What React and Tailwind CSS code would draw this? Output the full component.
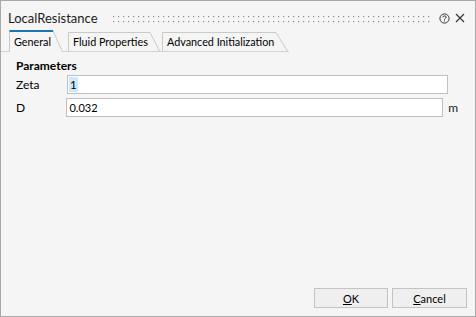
import React from "react";

const font = { fontFamily: 'Lato, "Noto Sans", sans-serif' };

function Tab({ label, width, slant, active, ml }) {
  const h = active ? 21 : 19;
  const H = h + (active ? 1 : 0);
  return (
    <div
      className={`relative flex items-center whitespace-nowrap ${active ? "z-10 -mb-px" : ""}`}
      style={{ width, height: H, marginLeft: ml }}
    >
      <svg className="absolute inset-0" width={width} height={H}>
        <path
          d={`M0.5,${H} L0.5,0.5 L${width - slant},0.5 L${width - 0.5},${H}`}
          fill="#f5f5f5"
          stroke="#c9c9c9"
          strokeWidth="1"
        />
        {active && <rect x="0.5" y="0" width={width - slant - 0.5} height="2" fill="#1f74b4" />}
      </svg>
      <span className="relative pl-[5px] text-[10.8px] leading-none text-black" style={{ marginTop: 2 }}>
        {label}
      </span>
    </div>
  );
}

export default function App() {
  return (
    <div
      className="w-[476px] h-[317px] bg-[#f5f5f5] border border-[#a9a9a9] flex flex-col overflow-hidden whitespace-nowrap"
      style={font}
    >
      {/* title bar */}
      <div className="h-[30px] shrink-0 flex items-start pl-[7px] pr-[10px]">
        <span className="mt-[11px] text-[13px] text-[#1b1b1b] leading-none">LocalResistance</span>
        <div className="flex-1 ml-[15px] mr-[9px] h-[7px] mt-[15px]">
          <svg width="100%" height="7" className="block">
            <defs>
              <pattern id="dots" width="5" height="5" patternUnits="userSpaceOnUse">
                <rect x="0" y="0" width="1.2" height="1.2" fill="#8c8c8c" />
              </pattern>
            </defs>
            <rect x="0" y="0" width="100%" height="7" fill="url(#dots)" />
          </svg>
        </div>
        <svg width="11" height="11" viewBox="0 0 11 11" className="mt-[12px] block">
          <circle cx="5.5" cy="5.5" r="4.6" fill="none" stroke="#333" strokeWidth="1" />
          <path d="M3.9,4.3 Q3.9,2.9 5.5,2.9 Q7.1,2.9 7.1,4.2 Q7.1,5 6.1,5.5 Q5.5,5.8 5.5,6.6" fill="none" stroke="#333" strokeWidth="1" />
          <rect x="5" y="7.4" width="1" height="1" fill="#333" />
        </svg>
        <svg width="10" height="10" viewBox="0 0 10 10" className="ml-[5px] mt-[12px] block">
          <path d="M1,1 L9,9 M9,1 L1,9" stroke="#333" strokeWidth="1.1" />
        </svg>
      </div>

      {/* tabs */}
      <div className="h-[21px] shrink-0 flex items-end">
        <div className="flex items-end w-[288px] border-b border-[#d4d4d4] h-[21px] pl-[8px]">
          <Tab label="General" width={54} slant={10} active ml={0} />
          <Tab label="Fluid Properties" width={92} slant={10} ml={5} />
          <Tab label="Advanced Initialization" width={126} slant={12} ml={2} />
        </div>
      </div>

      {/* panel */}
      <div className="flex-1 flex flex-col pl-[15px] pr-[17px]">
        <div className="mt-[7px] text-[12px] font-bold leading-[14px] text-black">Parameters</div>
        <div className="mt-[2px] flex items-center">
          <span className="w-[51px] text-[12px] text-black leading-none">Zeta</span>
          <div className="w-[381px] h-[19px] bg-white border border-[#bfbfbf] flex items-center pl-[1px]">
            <span className="bg-[#cce8ff] text-[11.5px] text-black leading-[15px] px-[1px]">1</span>
          </div>
        </div>
        <div className="mt-[4px] flex items-center">
          <span className="w-[51px] text-[12px] text-black leading-none">D</span>
          <div className="w-[381px] h-[19px] bg-white border border-[#bfbfbf] flex items-center pl-[2px]">
            <span className="text-[11px] text-black leading-[15px]">0.032</span>
          </div>
          <span className="ml-[5px] text-[12px] text-[#1b1b1b] leading-none">m</span>
        </div>

        <div className="flex-1" />
        <div className="flex justify-end gap-[4px] mb-[8px] -mr-[9px]">
          <button className="w-[74px] h-[20px] bg-[#efefef] border border-[#c3c3c3] text-[11px] leading-none text-black flex items-center justify-center">
            <span><span className="underline">O</span>K</span>
          </button>
          <button className="w-[75px] h-[20px] bg-[#efefef] border border-[#c3c3c3] text-[11px] leading-none text-black flex items-center justify-center">
            <span><span className="underline">C</span>ancel</span>
          </button>
        </div>
      </div>
    </div>
  );
}
